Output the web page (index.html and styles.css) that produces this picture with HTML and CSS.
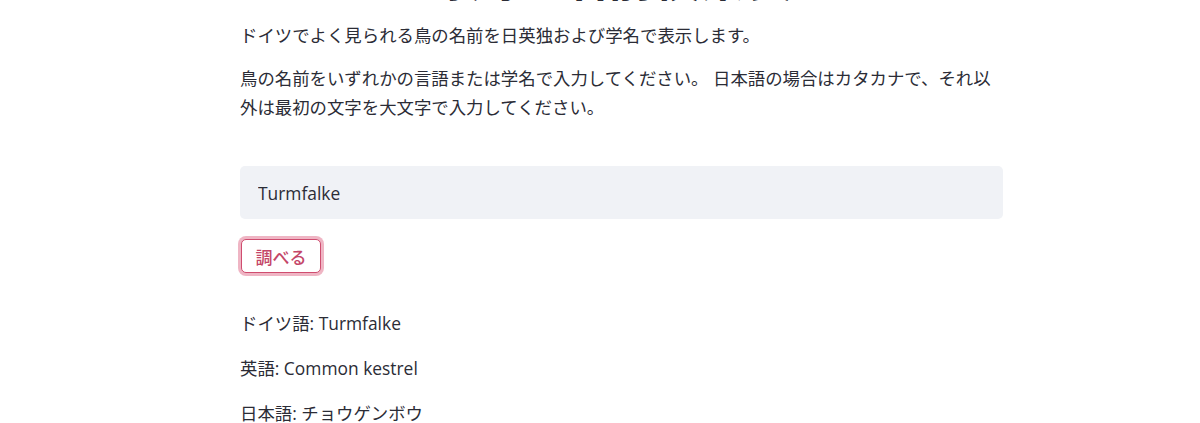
FILE: index.html
```html
<!DOCTYPE html>
<html lang="ja">
<head>
    <meta charset="UTF-8">
    <meta name="viewport" content="width=device-width, initial-scale=1.0">
    <title>鳥の名前検索</title>
    <link rel="stylesheet" href="styles.css">
</head>
<body>
    <div class="main">
        <h1 class="title">ドイツの野鳥の名前検索表</h1>
        <p>ドイツでよく見られる鳥の名前を日英独および学名で表示します。</p>
        <p>鳥の名前をいずれかの言語または学名で入力してください。 日本語の場合はカタカナで、それ以外は最初の文字を大文字で入力してください。</p>

        <div class="search">
            <input type="text" class="search-input" value="Turmfalke">
        </div>
        <button class="lookup-btn">調べる</button>

        <div class="results">
            <p>ドイツ語: Turmfalke</p>
            <p>英語: Common kestrel</p>
            <p>日本語: チョウゲンボウ</p>
        </div>
    </div>
</body>
</html>
```

FILE: styles.css
```css
/* Page base */
body {
    margin: 0;
    background-color: #ffffff;
    color: #2b2c36;
    font-family: "Open Sans", "Noto Sans CJK JP", sans-serif;
    font-size: 17.4px;
    line-height: 29px;
    overflow: hidden;
}
.main {
    width: 763px;
    margin-left: 240px;
}
/* title sits mostly above the viewport, only its foot shows */
.title {
    font-size: 46px;
    line-height: 56px;
    font-weight: 700;
    margin: -50px 0 15px 0;
    padding: 0;
}
p {
    margin: 0 0 14px 0;
}
.search {
    margin-top: 44px;
}
.search-input {
    display: block;
    width: 100%;
    height: 53px;
    box-sizing: border-box;
    padding: 0 18px;
    border: none;
    border-radius: 5px;
    background-color: #f0f2f6;
    color: #2b2c36;
    font-family: inherit;
    font-size: 17.4px;
    outline: none;
}
.lookup-btn {
    display: block;
    margin: 20px 0 0 1px;
    width: 80px;
    height: 34px;
    padding: 0;
    background-color: #ffffff;
    border: 1px solid #cf4d6f;
    border-radius: 5px;
    box-shadow: 0 0 0 3px rgba(226, 120, 148, 0.55); /* focus ring */
    color: #c44668;
    font-family: inherit;
    font-size: 17px;
    font-weight: 500;
    cursor: pointer;
}
.results {
    margin-top: 36px;
}
.results p {
    margin-bottom: 16px;
}
```
